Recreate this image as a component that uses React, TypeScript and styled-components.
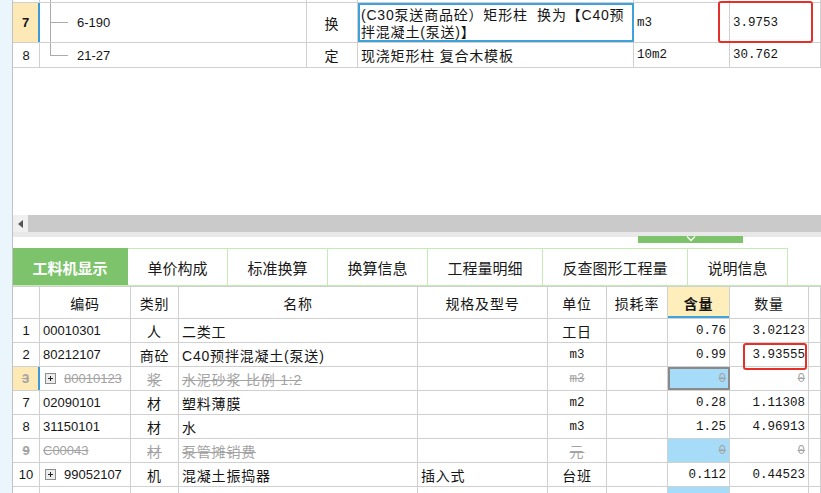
import React from 'react';
import styled, { createGlobalStyle } from 'styled-components';

const SANS = `"Liberation Sans", "Noto Sans CJK SC", sans-serif`;
const MONO = `"Liberation Mono", "Noto Sans CJK SC", monospace`;
const LINE = '#d0d0d0';
const OFF = '#a3a3a3';

const GlobalStyle = createGlobalStyle`
  html, body {
    margin: 0;
    padding: 0;
    background: #fff;
  }
  body {
    font-family: ${SANS};
    font-size: 14px;
    color: #151515;
  }
`;

const Page = styled.div`
  position: relative;
  display: flex;
  width: 821px;
  height: 493px;
  overflow: hidden;
`;

const SideStrip = styled.div`
  flex: none;
  width: 12px;
  background: #ebf6fc;
`;

const Main = styled.div`
  flex: 1;
  min-width: 0;
  display: flex;
  flex-direction: column;
  border-left: 1px solid #c2c2c2;
`;

/* ---------- upper grid ---------- */

const TopPanel = styled.div`
  flex: none;
  height: 215px;
  overflow: hidden;
`;

const TopRows = styled.div`
  margin-top: -22px;
`;

const Row = styled.div<{ $h: number }>`
  display: flex;
  box-sizing: border-box;
  height: ${(p) => p.$h}px;
  border-bottom: 1px solid ${LINE};
`;

const Cell = styled.div<{
  $w?: number;
  $align?: 'left' | 'center' | 'right';
  $bg?: string;
  $mono?: boolean;
  $off?: boolean;
  $bold?: boolean;
  $pad?: number;
}>`
  box-sizing: border-box;
  flex: ${(p) => (p.$w ? 'none' : '1')};
  width: ${(p) => (p.$w ? `${p.$w}px` : 'auto')};
  min-width: 0;
  display: flex;
  align-items: center;
  justify-content: ${(p) =>
    p.$align === 'center' ? 'center' : p.$align === 'right' ? 'flex-end' : 'flex-start'};
  padding: 0 ${(p) => (p.$pad ?? 3)}px;
  border-right: 1px solid ${LINE};
  background: ${(p) => p.$bg ?? 'transparent'};
  font-family: ${(p) => (p.$mono ? MONO : SANS)};
  font-size: ${(p) => (p.$mono ? '12.5px' : '14px')};
  letter-spacing: ${(p) => (p.$mono ? '0' : '0.8px')};
  font-weight: ${(p) => (p.$bold ? 700 : 400)};
  color: ${(p) => (p.$off ? OFF : '#151515')};
  text-decoration: ${(p) => (p.$off ? 'line-through' : 'none')};
  white-space: nowrap;
  overflow: hidden;
`;

const NumCell = styled(Cell)<{ $current?: boolean }>`
  font-size: 13px;
  letter-spacing: 0;
  background: ${(p) => (p.$current ? '#fde9b5' : 'transparent')};
  border-right: ${(p) => (p.$current ? '2px solid #3a9bd8' : `1px solid ${LINE}`)};
`;

const CodeText = styled.span`
  font-size: 13px;
  letter-spacing: 0;
`;

const TreeGuide = styled.span<{ $last?: boolean }>`
  flex: none;
  align-self: stretch;
  width: 18px;
  margin: 0 9px 0 10px;
  background:
    linear-gradient(#ababab, #ababab) left top / 1px ${(p) => (p.$last ? '50%' : '100%')} no-repeat,
    linear-gradient(#ababab, #ababab) left center / 100% 1px no-repeat;
`;

const EditCell = styled(Cell)`
  white-space: normal;
  align-items: flex-start;
  padding: 2px 1px 0;
  border: 2px solid #3ea2da;
  line-height: 17px;
`;

/* ---------- scroll + splitter ---------- */

const HScroll = styled.div`
  flex: none;
  display: flex;
  height: 17px;
  background: #cacaca;
`;

const ScrollButton = styled.div`
  flex: none;
  width: 15px;
  display: flex;
  align-items: center;
  justify-content: center;
  background: #f0f0f0;

  &::before {
    content: '';
    border-style: solid;
    border-width: 4px 5px 4px 0;
    border-color: transparent #555 transparent transparent;
  }
`;

const ScrollFoot = styled.div`
  flex: none;
  height: 5px;
  background: #e8e8e8;
`;

const SplitArea = styled.div`
  flex: none;
  height: 11px;
  display: flex;
  align-items: flex-start;
`;

const SplitHandle = styled.div`
  width: 105px;
  height: 7px;
  margin-left: 625px;
  margin-top: -1px;
  background: #7cc36b;
  display: flex;
  justify-content: center;
`;

/* ---------- tabs ---------- */

const TabBar = styled.div`
  flex: none;
  display: flex;
  height: 38px;
  border-bottom: 1px solid #c5ebb5;
  box-sizing: border-box;
`;

const Tab = styled.div<{ $w: number; $active?: boolean }>`
  box-sizing: border-box;
  flex: none;
  width: ${(p) => p.$w}px;
  display: flex;
  align-items: center;
  justify-content: center;
  font-size: 15px;
  font-weight: ${(p) => (p.$active ? 700 : 400)};
  color: ${(p) => (p.$active ? '#fff' : '#1a1a1a')};
  background: ${(p) => (p.$active ? '#7cc36b' : '#fff')};
  border-top: 1px solid ${(p) => (p.$active ? '#7cc36b' : '#c5ebb5')};
  border-right: 1px solid ${(p) => (p.$active ? '#7cc36b' : '#c5ebb5')};
`;

/* ---------- lower grid ---------- */

const LowerGrid = styled.div`
  flex: 1;
  border-top: 1px solid ${LINE};
`;

const HeadCell = styled(Cell)<{ $active?: boolean }>`
  justify-content: center;
  font-weight: ${(p) => (p.$active ? 700 : 400)};
  background: ${(p) => (p.$active ? '#fdeebc' : '#fff')};
  box-shadow: ${(p) => (p.$active ? 'inset 0 -2px 0 #3fa3dc' : 'none')};
`;

const QtyCell = styled(Cell)<{ $sel?: boolean }>`
  outline: ${(p) => (p.$sel ? '2px solid #8a8a8a' : 'none')};
  outline-offset: -2px;
`;

const PlusBox = styled.svg`
  flex: none;
  margin: 0 8px 0 2px;
`;

const Annot = styled.div`
  position: absolute;
  box-sizing: border-box;
  border: 2px solid #e5302a;
  border-radius: 3px;
  pointer-events: none;
`;

type Mat = {
  no: string;
  code: string;
  type: string;
  name: string;
  spec?: string;
  unit: string;
  qty: string;
  amount: string;
  off?: boolean;
  plus?: boolean;
  sel?: boolean;
};

const mats: Mat[] = [
  { no: '1', code: '00010301', type: '人', name: '二类工', unit: '工日', qty: '0.76', amount: '3.02123' },
  { no: '2', code: '80212107', type: '商砼', name: 'C40预拌混凝土(泵送)', unit: 'm3', qty: '0.99', amount: '3.93555' },
  { no: '3', code: '80010123', type: '浆', name: '水泥砂浆 比例 1:2', unit: 'm3', qty: '0', amount: '0', off: true, plus: true, sel: true },
  { no: '7', code: '02090101', type: '材', name: '塑料薄膜', unit: 'm2', qty: '0.28', amount: '1.11308' },
  { no: '8', code: '31150101', type: '材', name: '水', unit: 'm3', qty: '1.25', amount: '4.96913' },
  { no: '9', code: 'C00043', type: '材', name: '泵管摊销费', unit: '元', qty: '0', amount: '0', off: true },
  { no: '10', code: '99052107', type: '机', name: '混凝土振捣器', spec: '插入式', unit: '台班', qty: '0.112', amount: '0.44523', plus: true },
  { no: '11', code: '99050503', type: '机', name: '灰浆搅拌机', spec: '拌筒容量200L', unit: '台班', qty: '0', amount: '0', off: true, plus: true },
];

const W = { no: 27, code: 91, type: 48, name: 239, spec: 130, unit: 59, loss: 61, qty: 62, amount: 79 };
const isLatin = (s: string) => /^[\x00-\x7f]+$/.test(s);

const Plus = () => (
  <PlusBox width="11" height="11" viewBox="0 0 11 11">
    <rect x="0.5" y="0.5" width="10" height="10" fill="#ececec" stroke="#8c8c8c" />
    <path d="M3 5.5h5M5.5 3v5" stroke="#222" strokeWidth="1" />
  </PlusBox>
);

const tabs = [
  { label: '工料机显示', w: 115, active: true },
  { label: '单价构成', w: 100 },
  { label: '标准换算', w: 100 },
  { label: '换算信息', w: 100 },
  { label: '工程量明细', w: 115 },
  { label: '反查图形工程量', w: 145 },
  { label: '说明信息', w: 100 },
];

export default function App() {
  return (
    <Page>
      <GlobalStyle />
      <SideStrip />
      <Main>
        <TopPanel>
          <TopRows>
            <Row $h={25}>
              <NumCell $w={27} $align="center">6</NumCell>
              <Cell $w={267} $pad={0}>
                <TreeGuide />
                <CodeText>5-181</CodeText>
              </Cell>
              <Cell $w={51} $align="center">定</Cell>
              <Cell $w={276}>现浇混凝土 矩形柱</Cell>
              <Cell $w={96} $mono>m3</Cell>
              <Cell $mono>3.9753</Cell>
            </Row>
            <Row $h={40}>
              <NumCell $w={27} $align="center" $bold $current>7</NumCell>
              <Cell $w={267} $pad={0}>
                <TreeGuide />
                <CodeText>6-190</CodeText>
              </Cell>
              <Cell $w={51} $align="center">换</Cell>
              <EditCell $w={276}>
                <span>
                  (C30泵送商品砼）矩形柱&nbsp;&nbsp;换为【C40预
                  <br />
                  拌混凝土(泵送)】
                </span>
              </EditCell>
              <Cell $w={96} $mono>m3</Cell>
              <Cell $mono>3.9753</Cell>
            </Row>
            <Row $h={25}>
              <NumCell $w={27} $align="center">8</NumCell>
              <Cell $w={267} $pad={0}>
                <TreeGuide $last />
                <CodeText>21-27</CodeText>
              </Cell>
              <Cell $w={51} $align="center">定</Cell>
              <Cell $w={276}>现浇矩形柱 复合木模板</Cell>
              <Cell $w={96} $mono>10m2</Cell>
              <Cell $mono>30.762</Cell>
            </Row>
          </TopRows>
        </TopPanel>

        <HScroll>
          <ScrollButton />
        </HScroll>
        <ScrollFoot />
        <SplitArea>
          <SplitHandle>
            <svg width="10" height="6" viewBox="0 0 10 6">
              <path d="M1 0.5l4 4 4-4" fill="none" stroke="#fff" strokeWidth="1.3" />
            </svg>
          </SplitHandle>
        </SplitArea>

        <TabBar>
          {tabs.map((t) => (
            <Tab key={t.label} $w={t.w} $active={t.active}>
              {t.label}
            </Tab>
          ))}
        </TabBar>

        <LowerGrid>
          <Row $h={32}>
            <HeadCell $w={W.no} />
            <HeadCell $w={W.code}>编码</HeadCell>
            <HeadCell $w={W.type}>类别</HeadCell>
            <HeadCell $w={W.name}>名称</HeadCell>
            <HeadCell $w={W.spec}>规格及型号</HeadCell>
            <HeadCell $w={W.unit}>单位</HeadCell>
            <HeadCell $w={W.loss}>损耗率</HeadCell>
            <HeadCell $w={W.qty} $active>含量</HeadCell>
            <HeadCell $w={W.amount}>数量</HeadCell>
            <HeadCell />
          </Row>
          {mats.map((m) => (
            <Row key={m.no} $h={24}>
              <NumCell $w={W.no} $align="center" $off={m.off} $bold={m.off} $current={m.sel}>
                {m.no}
              </NumCell>
              <Cell $w={W.code} $off={m.off}>
                {m.plus && <Plus />}
                <CodeText>{m.code}</CodeText>
              </Cell>
              <Cell $w={W.type} $align="center" $off={m.off}>{m.type}</Cell>
              <Cell $w={W.name} $off={m.off}>{m.name}</Cell>
              <Cell $w={W.spec} $off={m.off}>{m.spec}</Cell>
              <Cell $w={W.unit} $align="center" $off={m.off} $mono={isLatin(m.unit)}>
                {m.unit}
              </Cell>
              <Cell $w={W.loss} />
              <QtyCell
                $w={W.qty}
                $align="right"
                $mono
                $off={m.off}
                $sel={m.sel}
                $bg={m.off ? '#a6dcf8' : undefined}
              >
                {m.qty}
              </QtyCell>
              <Cell $w={W.amount} $align="right" $mono $off={m.off}>{m.amount}</Cell>
              <Cell />
            </Row>
          ))}
        </LowerGrid>
      </Main>

      <Annot style={{ left: 718, top: 1, width: 95, height: 42 }} />
      <Annot style={{ left: 743, top: 343, width: 64, height: 27 }} />
    </Page>
  );
}
